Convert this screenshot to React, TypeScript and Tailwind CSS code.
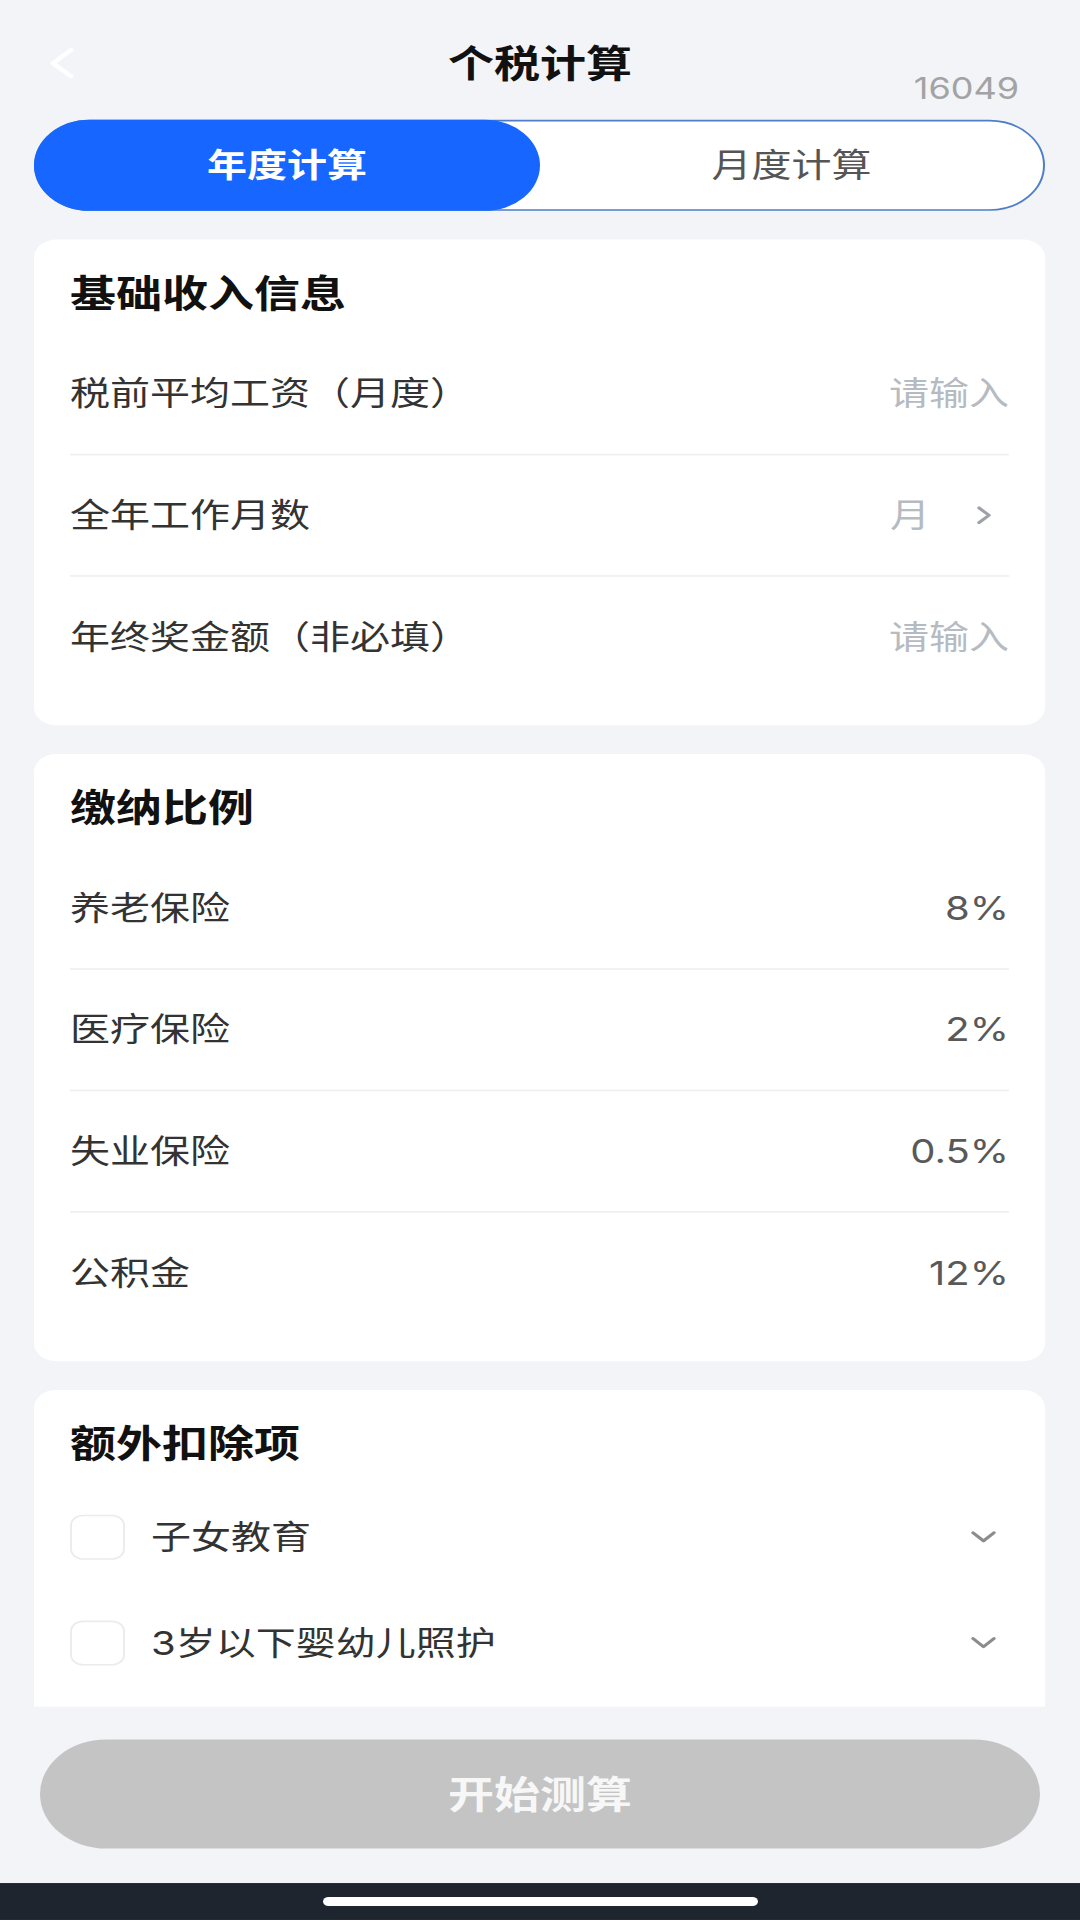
import React from "react";

function ChevronRight() {
  return (
    <svg width="16" height="24" viewBox="0 0 16 24" fill="none" className="ml-[46px] mr-[17px]">
      <path d="M3 3 L13 12 L3 21" stroke="#9ea2a8" strokeWidth="3.5" strokeLinecap="round" strokeLinejoin="round" />
    </svg>
  );
}

function ChevronDown() {
  return (
    <svg width="27" height="17" viewBox="0 0 27 17" fill="none" className="mr-[12px]">
      <path d="M3 3 L13.5 13 L24 3" stroke="#8c8c8c" strokeWidth="3.5" strokeLinecap="round" strokeLinejoin="round" />
    </svg>
  );
}

function Row({ label, right, last }: { label: string; right: React.ReactNode; last?: boolean }) {
  return (
    <div
      className={
        last
          ? "flex h-[148px] items-center justify-between"
          : "flex h-[148px] items-center justify-between border-b-2 border-[#efefef]"
      }
    >
      <span className="text-[40px] leading-none text-[#333333]">{label}</span>
      {right}
    </div>
  );
}

function Placeholder() {
  return <span className="text-[40px] leading-none text-[#b6bac1]">请输入</span>;
}

function Value({ v }: { v: string }) {
  return <span className="text-[40px] leading-none text-[#595959]">{v}</span>;
}

function CheckRow({ label }: { label: string }) {
  return (
    <div className="flex h-[129px] items-center">
      <div className="h-[55px] w-[55px] rounded-[13px] border-2 border-[#ececec] bg-white" />
      <span className="ml-[26px] flex-1 text-[40px] leading-none text-[#333333]">{label}</span>
      <ChevronDown />
    </div>
  );
}

function Heading({ children }: { children: React.ReactNode }) {
  return (
    <div className="flex h-[115px] items-center pt-[14px] text-[46px] font-bold leading-none text-[#111111]">
      {children}
    </div>
  );
}

export default function App() {
  return (
    <div className="h-[1920px] w-[1080px] overflow-hidden bg-[#f3f4f8] font-['Inter','Noto_Sans_CJK_SC',sans-serif]">
      <div className="flex h-[2340px] w-[1080px] origin-top scale-y-[0.8205] flex-col bg-[#f3f4f8]">
        {/* Header */}
        <div className="relative h-[146px] shrink-0">
          <div className="mt-[23px] flex h-[108px] items-center justify-between px-[44px]">
            <svg width="36" height="44" viewBox="0 0 36 44" fill="none">
              <path d="M27 6 L9 22 L27 38" stroke="#ffffff" strokeWidth="5" strokeLinecap="round" strokeLinejoin="round" />
            </svg>
            <span className="text-[46px] font-semibold leading-none text-[#111111]">个税计算</span>
            <div className="w-[36px]" />
          </div>
          <span className="absolute right-[61px] top-[90px] text-[36px] leading-none text-[#a3a3a3]">16049</span>
        </div>

        {/* Segmented control */}
        <div className="ml-[34px] mr-[35px] flex h-[111px] shrink-0 rounded-full border-2 border-[#4d7fc8] bg-white">
          <div className="-my-[2px] -ml-[2px] flex w-[506px] items-center justify-center rounded-full bg-[#1766ff] text-[40px] font-semibold leading-none text-white">
            年度计算
          </div>
          <div className="flex flex-1 items-center justify-center text-[40px] leading-none text-[#555555]">
            月度计算
          </div>
        </div>

        {/* Scroll content */}
        <div className="flex min-h-0 flex-1 flex-col overflow-hidden pl-[34px] pr-[35px]">
          <div className="mt-[35px] shrink-0 rounded-[22px] bg-white px-[36px] pb-[33px]">
            <Heading>基础收入信息</Heading>
            <Row label="税前平均工资（月度）" right={<Placeholder />} />
            <Row
              label="全年工作月数"
              right={
                <span className="flex items-center">
                  <span className="text-[40px] leading-none text-[#b6bac1]">月</span>
                  <ChevronRight />
                </span>
              }
            />
            <Row label="年终奖金额（非必填）" right={<Placeholder />} last />
          </div>

          <div className="mt-[35px] shrink-0 rounded-[22px] bg-white px-[36px] pb-[33px]">
            <Heading>缴纳比例</Heading>
            <Row label="养老保险" right={<Value v="8%" />} />
            <Row label="医疗保险" right={<Value v="2%" />} />
            <Row label="失业保险" right={<Value v="0.5%" />} />
            <Row label="公积金" right={<Value v="12%" />} last />
          </div>

          <div className="mt-[35px] shrink-0 rounded-[22px] bg-white px-[36px] pb-[60px]">
            <Heading>额外扣除项</Heading>
            <CheckRow label="子女教育" />
            <CheckRow label="3岁以下婴幼儿照护" />
          </div>
        </div>

        {/* Footer */}
        <div className="flex h-[260px] shrink-0 flex-col">
          <div className="mx-[40px] mt-[40px] flex h-[133px] items-center justify-center rounded-full bg-[#c4c4c4] text-[46px] font-semibold leading-none text-[#f7f7f7]">
            开始测算
          </div>
          <div className="mt-auto flex h-[45px] items-center justify-center bg-[#1f252e]">
            <div className="h-[11px] w-[435px] rounded-full bg-white" />
          </div>
        </div>
      </div>
    </div>
  );
}
